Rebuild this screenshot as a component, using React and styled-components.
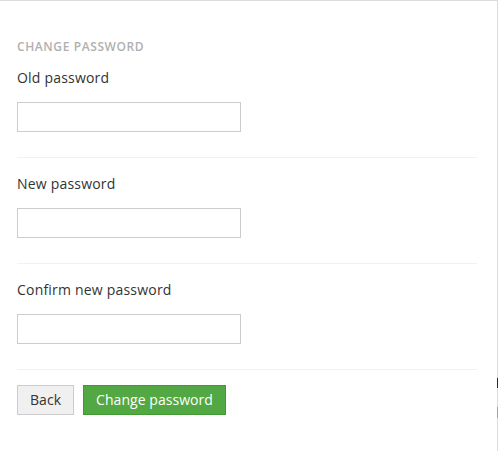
import React from "react";
import styled, { createGlobalStyle } from "styled-components";

const GlobalStyle = createGlobalStyle`
  html, body {
    margin: 0;
    padding: 0;
    background: #ffffff;
  }
  body {
    font-family: "Open Sans", "Noto Sans", "Liberation Sans", sans-serif;
    color: #333333;
  }
  * { box-sizing: border-box; }
`;

const Panel = styled.div`
  position: relative;
  width: 498px;
  min-height: 451px;
  border-top: 1px solid #dcdcdc;
  border-right: 1px solid #dcdcdc;
  padding: 37px 20px 0 17px;
  background: #ffffff;
`;

const Title = styled.h2`
  margin: 0 0 13px;
  font-size: 12px;
  line-height: 17px;
  font-weight: 600;
  letter-spacing: 0.6px;
  text-transform: uppercase;
  color: #b0b0b0;
`;

const FieldGroup = styled.div`
  padding-bottom: 25px;
  border-bottom: 1px solid #f2f2f2;
  & + & {
    padding-top: 16px;
  }
`;

const Label = styled.label`
  display: block;
  margin-bottom: 14px;
  font-size: 14px;
  line-height: 20px;
  font-weight: 500;
  letter-spacing: 0.2px;
  color: #333333;
`;

const Input = styled.input`
  display: block;
  width: 224px;
  height: 30px;
  margin: 0;
  padding: 4px 8px;
  border: 1px solid #cccccc;
  border-radius: 0;
  background: #ffffff;
  font: inherit;
  font-size: 14px;
  outline: none;
`;

const Actions = styled.div`
  display: flex;
  gap: 9px;
  padding-top: 15px;
`;

const Button = styled.button`
  height: 30px;
  margin: 0;
  padding: 0 12px;
  border: 1px solid ${(p) => (p.$primary ? "#3f9a31" : "#cccccc")};
  border-radius: 0;
  background: ${(p) => (p.$primary ? "#52a842" : "#f0f0f0")};
  color: ${(p) => (p.$primary ? "#ffffff" : "#333333")};
  font-family: inherit;
  font-size: 14px;
  letter-spacing: 0.05px;
  line-height: 28px;
  cursor: pointer;
`;

const EdgeMark = styled.span`
  position: absolute;
  right: -1px;
  width: 1px;
  top: ${(p) => p.$top}px;
  height: ${(p) => p.$h}px;
  background: ${(p) => p.$color};
`;

const fields = [
  { id: "old", label: "Old password" },
  { id: "new", label: "New password" },
  { id: "confirm", label: "Confirm new password" },
];

export default function App() {
  return (
    <>
      <GlobalStyle />
      <Panel>
        <Title>Change password</Title>
        {fields.map((f) => (
          <FieldGroup key={f.id}>
            <Label htmlFor={f.id}>{f.label}</Label>
            <Input id={f.id} type="password" />
          </FieldGroup>
        ))}
        <Actions>
          <Button type="button">Back</Button>
          <Button type="button" $primary>
            Change password
          </Button>
        </Actions>
        <EdgeMark $top={377} $h={10} $color="#2b2b2b" />
        <EdgeMark $top={406} $h={11} $color="#78aed6" />
      </Panel>
    </>
  );
}
